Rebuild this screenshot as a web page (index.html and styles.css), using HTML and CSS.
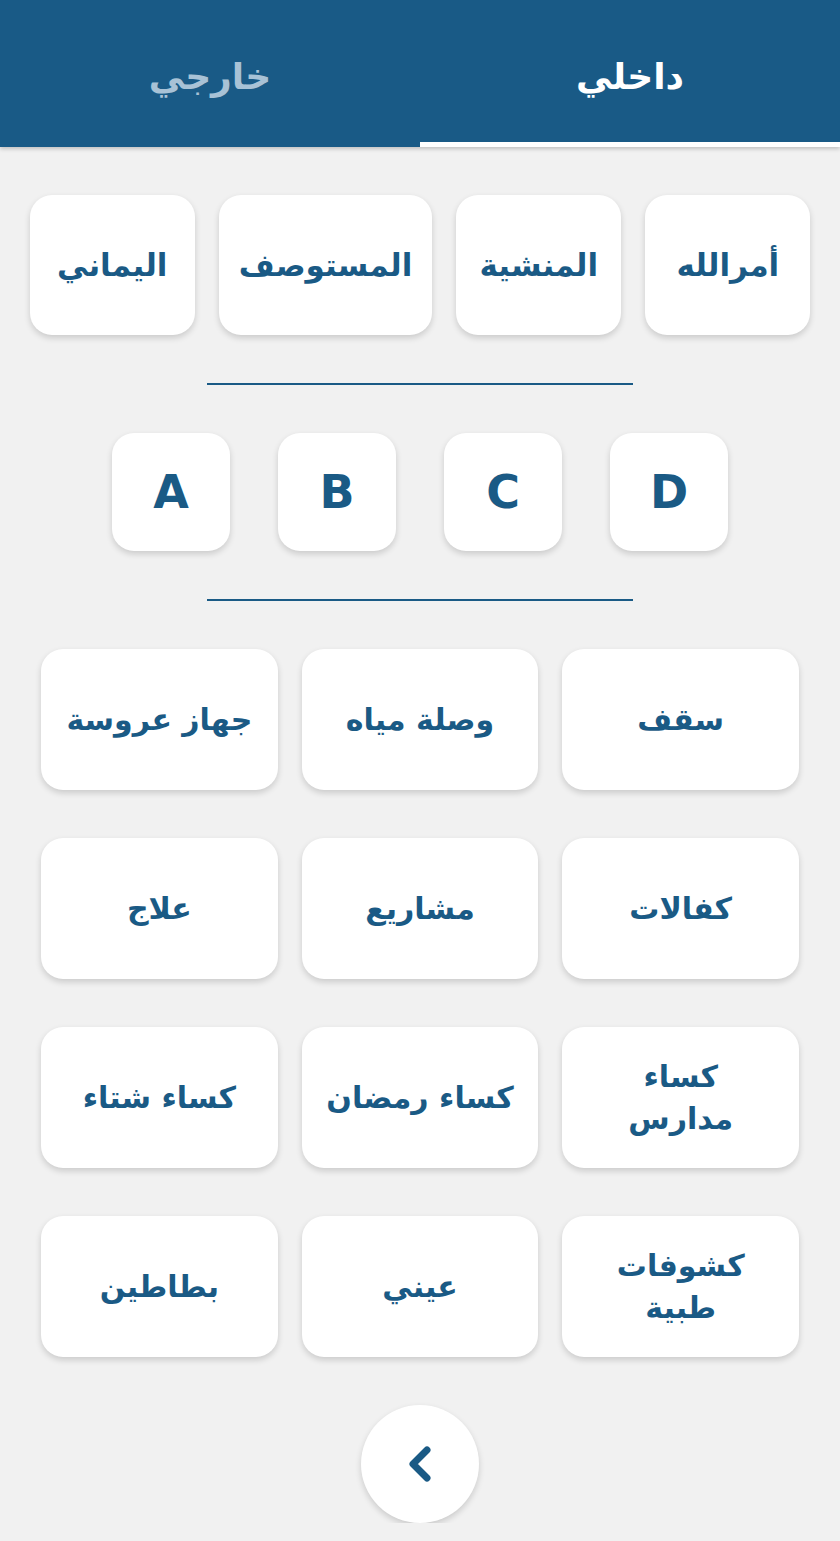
FILE: index.html
```html
<!DOCTYPE html>
<html lang="ar" dir="rtl">
<head>
<meta charset="utf-8">
<link rel="stylesheet" href="styles.css">
</head>
<body>
<header class="tabs">
  <div class="tab active">داخلي</div>
  <div class="tab">خارجي</div>
</header>
<main class="content">
  <div class="places">
    <div class="card place">أمرالله</div>
    <div class="card place">المنشية</div>
    <div class="card place">المستوصف</div>
    <div class="card place">اليماني</div>
  </div>
  <div class="divider"></div>
  <div class="letters">
    <div class="card letter">D</div>
    <div class="card letter">C</div>
    <div class="card letter">B</div>
    <div class="card letter">A</div>
  </div>
  <div class="divider"></div>
  <div class="grid">
    <div class="card item">سقف</div>
    <div class="card item">وصلة مياه</div>
    <div class="card item">جهاز عروسة</div>
    <div class="card item">كفالات</div>
    <div class="card item">مشاريع</div>
    <div class="card item">علاج</div>
    <div class="card item">كساء<br>مدارس</div>
    <div class="card item">كساء رمضان</div>
    <div class="card item">كساء شتاء</div>
    <div class="card item">كشوفات<br>طبية</div>
    <div class="card item">عيني</div>
    <div class="card item">بطاطين</div>
  </div>
  <div class="back">
    <svg width="34" height="40" viewBox="0 0 34 40"><path d="M24 6 L10 20 L24 34" fill="none" stroke="#1a5a85" stroke-width="7" stroke-linecap="round" stroke-linejoin="round"/></svg>
  </div>
</main>
</body>
</html>
```
FILE: styles.css
```css
html, body {
  margin: 0;
  padding: 0;
  background: #f1f1f1;
  font-family: "DejaVu Sans", sans-serif;
  color: #1a5a85;
}
.tabs {
  display: flex;
  height: 147px;
  background: #195a86;
  box-shadow: 0 2px 4px rgba(0,0,0,0.2);
}
.tab {
  flex: 1;
  display: flex;
  align-items: center;
  justify-content: center;
  font-size: 36px;
  font-weight: bold;
  color: #a8c2d6;
  padding-top: 6px;
  box-sizing: border-box;
}
.tab.active {
  color: #ffffff;
  border-bottom: 5px solid #ffffff;
  padding-top: 11px;
}
.content {
  display: flex;
  flex-direction: column;
  align-items: center;
  gap: 48px;
  padding-top: 48px;
}
.card {
  background: #fff;
  border-radius: 22px;
  box-shadow: 0 3px 6px rgba(0,0,0,0.16);
  display: flex;
  align-items: center;
  justify-content: center;
  text-align: center;
  font-weight: bold;
}
.places {
  display: flex;
  gap: 24px;
  justify-content: center;
}
.place {
  min-width: 165px;
  height: 140px;
  padding: 0 20px;
  box-sizing: border-box;
  font-size: 31px;
}
.divider {
  width: 426px;
  height: 2px;
  background: #1a5a85;
}
.letters {
  display: flex;
  gap: 48px;
  justify-content: center;
}
.letter {
  width: 118px;
  height: 118px;
  font-size: 46px;
}
.grid {
  display: grid;
  grid-template-columns: repeat(3, 1fr);
  column-gap: 24px;
  row-gap: 48px;
  width: 100%;
  padding: 0 41px;
  box-sizing: border-box;
}
.item {
  height: 141px;
  font-size: 30px;
  line-height: 42px;
}
.back {
  width: 118px;
  height: 118px;
  border-radius: 50%;
  background: #fff;
  box-shadow: 0 3px 6px rgba(0,0,0,0.16);
  display: flex;
  align-items: center;
  justify-content: center;
}
```
